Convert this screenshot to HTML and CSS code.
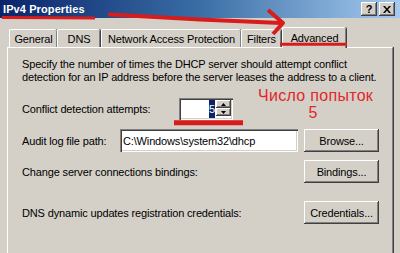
FILE: index.html
```html
<!DOCTYPE html>
<html>
<head>
<meta charset="utf-8">
<link rel="stylesheet" href="styles.css">
</head>
<body>
<div class="window">
  <div class="titlebar">
    <span class="title">IPv4 Properties</span>
    <div class="tb-buttons">
      <span class="tb-btn">?</span>
      <span class="tb-btn"><svg width="8" height="7" viewBox="0 0 8 7"><path d="M0 0h2l2 2.5L6 0h2L5 3.5 8 7H6L4 4.5 2 7H0l3-3.5z" fill="#000"/></svg></span>
    </div>
  </div>
  <div class="tabstrip">
    <div class="tab t-general">General</div>
    <div class="tab t-dns">DNS</div>
    <div class="tab t-nap">Network Access Protection</div>
    <div class="tab t-filters">Filters</div>
    <div class="tab active t-adv">Advanced</div>
  </div>
  <div class="panel">
    <p class="desc">Specify the number of times the DHCP server should attempt conflict<br>detection for an IP address before the server leases the address to a client.</p>
    <div class="row row-spin">
      <span class="label l-spin">Conflict detection attempts:</span>
      <div class="spinbox">
        <span class="value"><span class="sel">5</span></span>
        <div class="spin-btns">
          <span class="sb"><svg width="5" height="3" viewBox="0 0 5 3"><path d="M2.5 0L5 3H0z" fill="#000"/></svg></span>
          <span class="sb"><svg width="5" height="3" viewBox="0 0 5 3"><path d="M0 0h5L2.5 3z" fill="#000"/></svg></span>
        </div>
      </div>
    </div>
    <div class="row row-audit">
      <span class="label l-audit">Audit log file path:</span>
      <div class="textbox">C:\Windows\system32\dhcp</div>
      <span class="button">Browse...</span>
    </div>
    <div class="row row-bind">
      <span class="label">Change server connections bindings:</span>
      <span class="button">Bindings...</span>
    </div>
    <div class="row row-cred">
      <span class="label">DNS dynamic updates registration credentials:</span>
      <span class="button">Credentials...</span>
    </div>
  </div>
</div>
<svg class="annot" width="400" height="253" viewBox="0 0 400 253">
  <path d="M2 17.5L95 18" stroke="#d81c1c" stroke-width="3" fill="none"/>
  <path d="M110 14.5L200 19.5L281 23" stroke="#d81c1c" stroke-width="4" fill="none" stroke-linecap="round"/>
  <path d="M268 10L283 23L273 34" stroke="#d81c1c" stroke-width="4" fill="none" stroke-linejoin="round"/>
  <path d="M280 44.2H347" stroke="#d81c1c" stroke-width="3"/>
  <path d="M174 122.8H243" stroke="#d81c1c" stroke-width="5"/>
</svg>
<div class="note">Число попыток<br>5</div>
</body>
</html>
```

FILE: styles.css
```css
* { box-sizing: border-box; }
html, body { margin: 0; padding: 0; }
body {
  width: 400px;
  height: 253px;
  overflow: hidden;
  background: #d4d0c8;
  font-family: "Liberation Sans", Arial, sans-serif;
  font-size: 11px;
  letter-spacing: -0.15px;
  color: #000;
  position: relative;
}
.window { width: 400px; }
.titlebar {
  height: 18px;
  background: linear-gradient(to right, #0a246a 0%, #3a6ea5 50%, #a6caf0 100%);
  display: flex;
  align-items: center;
  padding-left: 3px;
}
.title {
  color: #fff;
  font-weight: bold;
  font-size: 11px;
  letter-spacing: 0.1px;
}
.tb-buttons {
  margin-left: auto;
  display: flex;
  gap: 2px;
  margin-right: 5px;
  align-self: flex-start;
  margin-top: 2px;
}
.tb-btn {
  width: 16px;
  height: 14px;
  background: #d4d0c8;
  box-shadow: inset -1px -1px #404040, inset 1px 1px #fff, inset -2px -2px #808080;
  display: flex;
  align-items: center;
  justify-content: center;
  font-weight: bold;
  font-size: 11px;
  line-height: 1;
}
.tabstrip {
  display: flex;
  align-items: flex-end;
  height: 29px;
  padding-left: 9px;
  position: relative;
  z-index: 2;
}
.tab {
  height: 18px;
  border-top: 1px solid #fff;
  border-left: 1px solid #fff;
  box-shadow: inset -1px 0 #808080, 1px 0 #404040;
  border-radius: 2px 2px 0 0;
  display: flex;
  align-items: center;
  justify-content: center;
  padding-top: 1px;
  background: #d4d0c8;
  white-space: nowrap;
}
.t-general { width: 48px; }
.t-dns { width: 43px; }
.t-nap { width: 140px; margin-left: 1px; }
.t-filters { width: 40px; }
.tab.active {
  width: 64px;
  height: 21px;
  margin-bottom: -1px;
  margin-left: 1px;
  padding-bottom: 2px;
}
.panel {
  margin-left: 7px;
  width: 386px;
  height: 206px;
  border-top: 1px solid #fff;
  border-left: 1px solid #fff;
  border-right: 1px solid #808080;
  box-shadow: 1px 0 #404040;
  padding: 10px 13px 0 14px;
  display: flex;
  flex-direction: column;
}
.desc {
  margin: 0;
  line-height: 13px;
  white-space: nowrap;
}
.row {
  display: flex;
  align-items: center;
  height: 23px;
  white-space: nowrap;
}
.row-spin { margin-top: 14px; height: 22px; }
.row-audit { margin-top: 9px; }
.row-bind { margin-top: 8px; }
.row-cred { margin-top: 18px; }
.l-spin { width: 157px; }
.l-audit { width: 98px; }
.spinbox {
  width: 54px;
  height: 22px;
  background: #fff;
  box-shadow: inset 1px 1px #808080, inset 2px 2px #404040, inset -1px -1px #fff, inset -2px -2px #d4d0c8;
  display: flex;
  padding: 2px;
}
.value {
  flex: 1;
  display: flex;
  justify-content: flex-end;
  align-items: center;
  padding-right: 1px;
}
.sel {
  background: #0a246a;
  color: #fff;
  line-height: 14px;
  padding: 2px 0;
}
.spin-btns {
  width: 15px;
  display: flex;
  flex-direction: column;
  padding: 0 0 2px 0;
}
.sb {
  flex: 1;
  background: #d4d0c8;
  box-shadow: inset -1px -1px #404040, inset 1px 1px #fff, inset -2px -2px #808080;
  display: flex;
  align-items: center;
  justify-content: center;
}
.textbox {
  width: 178px;
  height: 23px;
  background: #fff;
  box-shadow: inset 1px 1px #808080, inset 2px 2px #404040, inset -1px -1px #fff, inset -2px -2px #d4d0c8;
  padding: 0 3px;
  display: flex;
  align-items: center;
}
.button {
  margin-left: auto;
  width: 75px;
  height: 23px;
  background: #d4d0c8;
  box-shadow: inset -1px -1px #404040, inset 1px 1px #fff, inset -2px -2px #808080;
  display: flex;
  align-items: center;
  justify-content: center;
}
.annot {
  position: absolute;
  left: 0;
  top: 0;
  z-index: 5;
  pointer-events: none;
}
.note {
  position: absolute;
  left: 258px;
  top: 87px;
  width: 110px;
  text-align: center;
  color: #e0282a;
  font-family: "Liberation Sans", Arial, sans-serif;
  font-size: 16px;
  line-height: 17px;
  letter-spacing: 0.3px;
  white-space: nowrap;
  z-index: 6;
}
```
